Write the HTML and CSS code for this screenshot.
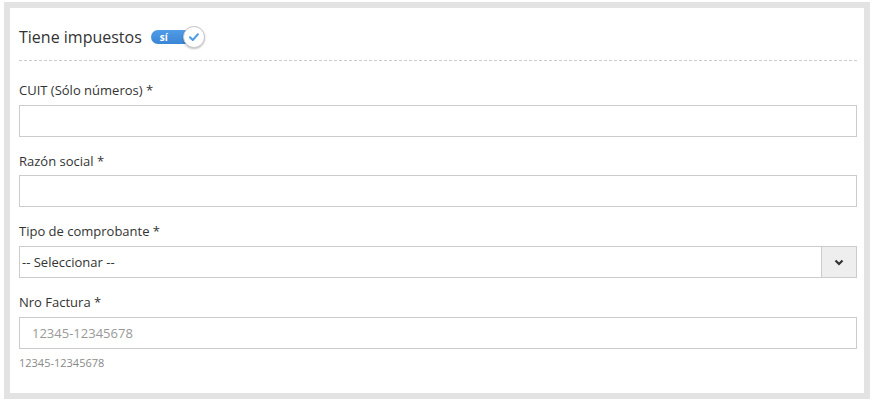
FILE: index.html
```html
<html>
<head>
    <title>Tiene impuestos</title>
    <meta charset="UTF-8">
    <meta name="viewport" content="width=device-width, initial-scale=1">
    <link rel="stylesheet" href="styles.css">
</head>
<body>
    <div class="panel">
        <div class="header">
            <span class="title">Tiene impuestos</span>
            <span class="switch">
                <span class="switch-track">sí</span>
                <span class="switch-knob">
                    <svg width="12" height="10" viewBox="0 0 12 10">
                        <path d="M2 5.2 L4.8 8 L10 2.2" fill="none" stroke="#4a9be8" stroke-width="2" stroke-linecap="round" stroke-linejoin="round" />
                    </svg>
                </span>
            </span>
        </div>

        <div class="field">
            <label for="cuit">CUIT (Sólo números) *</label>
            <input type="text" id="cuit" name="cuit" />
        </div>

        <div class="field">
            <label for="razon">Razón social *</label>
            <input type="text" id="razon" name="razon" />
        </div>

        <div class="field">
            <label for="tipo">Tipo de comprobante *</label>
            <div class="select">
                <span class="select-value">-- Seleccionar --</span>
                <span class="select-btn">
                    <svg width="10" height="7" viewBox="0 0 10 7">
                        <path d="M1.5 1.5 L5 5 L8.5 1.5" fill="none" stroke="#333" stroke-width="2.2" />
                    </svg>
                </span>
            </div>
        </div>

        <div class="field last">
            <label for="nro">Nro Factura *</label>
            <input type="text" id="nro" name="nro" placeholder="12345-12345678" />
            <div class="help">12345-12345678</div>
        </div>
    </div>
</body>
</html>
```

FILE: styles.css
```css
body {
    margin: 0;
    font-family: "Open Sans", Arial, Helvetica, sans-serif;
    color: #333;
    background: #fff;
}

.panel {
    margin: 2px 7px 4px 4px;
    border: 6px solid #e3e3e3;
    padding: 0 7px 23px 9px;
    background: #fff;
}

.header {
    display: flex;
    align-items: center;
    height: 46px;
    margin-top: 6px;
    border-bottom: 1px dashed #ccc;
    margin-bottom: 20px;
}

.title {
    font-size: 16px;
    margin-right: 9px;
}

.switch {
    position: relative;
    display: inline-block;
    width: 54px;
    height: 22px;
}

.switch-track {
    position: absolute;
    left: 0;
    top: 4px;
    width: 44px;
    height: 14px;
    border-radius: 7px;
    background: linear-gradient(#4f9be6, #3a86d6);
    color: #fff;
    font-size: 10px;
    font-weight: bold;
    line-height: 14px;
    padding-left: 9px;
    box-sizing: border-box;
}

.switch-knob {
    position: absolute;
    left: 32px;
    top: 0;
    width: 20px;
    height: 20px;
    border-radius: 50%;
    background: #fff;
    border: 1px solid #c8c8c8;
    box-shadow: 0 1px 2px rgba(0, 0, 0, 0.25);
    display: flex;
    align-items: center;
    justify-content: center;
}

.field {
    margin-bottom: 15px;
}

.field.last {
    margin-bottom: 0;
}

.field label {
    display: block;
    font-size: 13px;
    line-height: 18.67px;
    margin-bottom: 5px;
}

input[type=text] {
    display: block;
    width: 100%;
    height: 32px;
    border: 1px solid #ccc;
    box-sizing: border-box;
    padding: 0 12px;
    font-family: "Open Sans", Arial, sans-serif;
    font-size: 13px;
    color: #333;
    outline: none;
}

input::placeholder {
    color: #999;
}

.select {
    display: flex;
    height: 32px;
    border: 1px solid #ccc;
    box-sizing: border-box;
}

.select-value {
    flex: 1;
    font-size: 13px;
    line-height: 30px;
    padding-left: 2px;
}

.select-btn {
    width: 34px;
    border-left: 1px solid #ccc;
    background: #eee;
    display: flex;
    align-items: center;
    justify-content: center;
}

.help {
    font-size: 11px;
    line-height: 15px;
    color: #8a8a8a;
    margin-top: 6px;
}
```
